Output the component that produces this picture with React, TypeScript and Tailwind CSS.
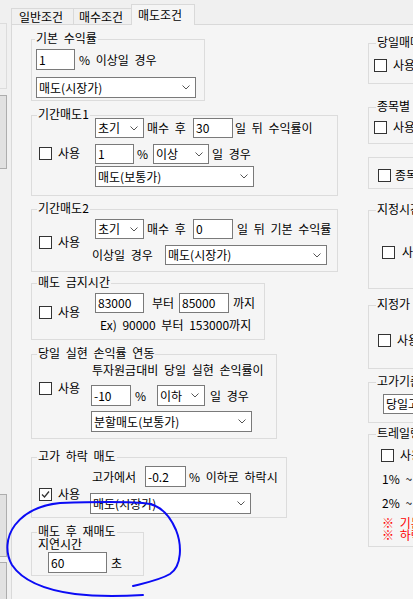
import type { ReactNode } from 'react';

// Windows-style "매도조건" tab page

function GroupBox({
    title,
    className,
    titleClassName = 'left-[5px]',
    children,
}: {
    title?: string;
    className: string;
    titleClassName?: string;
    children?: ReactNode;
}) {
    return (
        <div className={`relative shrink-0 border border-[#dcdcdc] ${className}`}>
            {title && (
                <span className={`absolute -top-[9px] whitespace-nowrap bg-[#f5f5f5] px-px leading-[14px] ${titleClassName}`}>
                    {title}
                </span>
            )}
            {children}
        </div>
    );
}

function CheckBox({ checked }: { checked?: boolean }) {
    return (
        <span className="flex h-[13px] w-[13px] shrink-0 items-center justify-center border border-[#333333] bg-white">
            {checked && (
                <svg width="9" height="9" viewBox="0 0 9 9">
                    <path d="M1 4.5 L3.5 7 L8 1.5" fill="none" stroke="#333333" strokeWidth="1.3" />
                </svg>
            )}
        </span>
    );
}

function UseCheck({
    checked,
    label = '사용',
    className = '',
    labelClassName = 'ml-[6px]',
}: {
    checked?: boolean;
    label?: string;
    className?: string;
    labelClassName?: string;
}) {
    return (
        <div className={`flex h-[14px] shrink-0 items-center ${className}`}>
            <CheckBox checked={checked} />
            <span className={`whitespace-nowrap leading-[14px] ${labelClassName}`}>{label}</span>
        </div>
    );
}

function TextBox({ value, className }: { value: string; className: string }) {
    return (
        <div className={`flex shrink-0 items-center border border-[#7a7a7a] bg-white pl-[2px] leading-[14px] ${className}`}>
            {value}
        </div>
    );
}

function Combo({ value, className }: { value: string; className: string }) {
    return (
        <div className={`flex shrink-0 items-center justify-between border border-[#7a7a7a] bg-white pl-[2px] pr-[5px] ${className}`}>
            <span className="whitespace-nowrap leading-[14px]">{value}</span>
            <svg width="8" height="5" viewBox="0 0 8 5" className="shrink-0">
                <path d="M0.5 0.5 L4 4 L7.5 0.5" fill="none" stroke="#555555" strokeWidth="1" />
            </svg>
        </div>
    );
}

const App = () => {
    return (
        <div className="relative h-[599px] w-[413px] overflow-hidden bg-[#f0f0f0] font-['Noto_Sans_CJK_KR',sans-serif] text-[12px] text-black [word-spacing:3px]">
            <div className="flex h-full">
                {/* clipped panel on the left */}
                <div className="flex w-[11px] shrink-0 flex-col">
                    <div className="mt-[23px] h-[71px] w-[7px] border-y border-r border-[#dcdcdc]" />
                    <div className="mt-[6px] h-[79px] w-[7px] border-y border-r border-[#adadad] bg-[#e1e1e1]" />
                    <div className="mt-[325px] h-[67px] w-[7px] border-y border-r border-[#adadad] bg-[#e1e1e1]" />
                    <div className="mt-[5px] h-[40px] w-[7px] border-r border-t border-[#adadad] bg-[#e1e1e1]" />
                </div>

                {/* tab control */}
                <div className="flex w-[440px] shrink-0 flex-col">
                    <div className="flex h-[24px] shrink-0 items-end">
                        <div className="flex h-[16px] w-[62px] items-center border-l border-t border-[#d9d9d9] pl-[7px]">일반조건</div>
                        <div className="flex h-[16px] w-[58px] items-center border-l border-t border-[#d9d9d9] pl-[5px]">매수조건</div>
                        <div className="relative z-10 -mb-px flex h-[21px] w-[64px] items-center border-x border-t border-[#d9d9d9] bg-[#f5f5f5] pl-[6px]">
                            매도조건
                        </div>
                    </div>

                    <div className="flex flex-1 border-l border-t border-[#d9d9d9] bg-[#f5f5f5] pl-[19px] pt-[14px]">
                        {/* left column */}
                        <div className="flex w-[307px] shrink-0 flex-col">
                            <GroupBox title="기본 수익률" titleClassName="left-[3px]" className="h-[62px] w-[174px] pl-[4px] pt-[9px]">
                                <div className="flex items-center">
                                    <TextBox value="1" className="h-[21px] w-[39px]" />
                                    <span className="ml-[4px]">% 이상일 경우</span>
                                </div>
                                <Combo value="매도(시장가)" className="mt-[7px] h-[21px] w-[160px]" />
                            </GroupBox>

                            <GroupBox title="기간매도1" className="mt-[14px] flex h-[81px] w-[307px] items-start pl-[7px] pt-[2px]">
                                <UseCheck className="mt-[28px] w-[56px]" />
                                <div className="flex flex-col">
                                    <div className="flex h-[20px] items-center">
                                        <Combo value="초기" className="h-[20px] w-[49px]" />
                                        <span className="ml-[3px] w-[46px] whitespace-nowrap">매수 후</span>
                                        <TextBox value="30" className="h-[20px] w-[40px]" />
                                        <span className="ml-[2px] whitespace-nowrap">일 뒤 수익률이</span>
                                    </div>
                                    <div className="mt-[6px] flex h-[20px] items-center">
                                        <TextBox value="1" className="h-[20px] w-[39px]" />
                                        <span className="ml-[3px] w-[16px]">%</span>
                                        <Combo value="이상" className="h-[20px] w-[56px]" />
                                        <span className="ml-[3px] whitespace-nowrap">일 경우</span>
                                    </div>
                                    <Combo value="매도(보통가)" className="mt-[2px] h-[21px] w-[159px]" />
                                </div>
                            </GroupBox>

                            <GroupBox title="기간매도2" className="mt-[13px] flex h-[63px] w-[307px] items-start pl-[7px] pt-[9px]">
                                <UseCheck className="mt-[16px] w-[53px]" />
                                <div className="flex flex-col">
                                    <div className="ml-[3px] flex h-[20px] items-center">
                                        <Combo value="초기" className="h-[20px] w-[49px]" />
                                        <span className="ml-[3px] w-[46px] whitespace-nowrap">매수 후</span>
                                        <TextBox value="0" className="h-[20px] w-[40px]" />
                                        <span className="ml-[4px] whitespace-nowrap">일 뒤 기본 수익률</span>
                                    </div>
                                    <div className="mt-[6px] flex h-[20px] items-center">
                                        <span className="w-[73px] whitespace-nowrap">이상일 경우</span>
                                        <Combo value="매도(시장가)" className="h-[20px] w-[162px]" />
                                    </div>
                                </div>
                            </GroupBox>

                            <GroupBox title="매도 금지시간" className="mt-[11px] flex h-[57px] w-[234px] items-start pl-[7px] pt-[9px]">
                                <UseCheck className="mt-[12px] w-[56px]" />
                                <div className="flex flex-col">
                                    <div className="flex h-[20px] items-center">
                                        <TextBox value="83000" className="h-[20px] w-[49px]" />
                                        <span className="ml-[8px] w-[27px] whitespace-nowrap">부터</span>
                                        <TextBox value="85000" className="h-[20px] w-[50px]" />
                                        <span className="ml-[4px] whitespace-nowrap">까지</span>
                                    </div>
                                    <span className="ml-[5px] mt-[5px] whitespace-nowrap leading-[14px]">Ex) 90000 부터 153000까지</span>
                                </div>
                            </GroupBox>

                            <GroupBox title="당일 실현 손익률 연동" className="mt-[14px] flex h-[85px] w-[246px] items-start pl-[7px] pt-[8px]">
                                <UseCheck className="mt-[18px] w-[53px]" />
                                <div className="flex flex-col">
                                    <span className="whitespace-nowrap leading-[14px]">투자원금대비 당일 실현 손익률이</span>
                                    <div className="-ml-px mt-[8px] flex h-[21px] items-center">
                                        <TextBox value="-10" className="h-[21px] w-[40px]" />
                                        <span className="ml-[4px] w-[22px]">%</span>
                                        <Combo value="이하" className="h-[21px] w-[48px]" />
                                        <span className="ml-[5px] whitespace-nowrap">일 경우</span>
                                    </div>
                                    <Combo value="분할매도(보통가)" className="-ml-px mt-[5px] h-[21px] w-[161px]" />
                                </div>
                            </GroupBox>

                            <GroupBox title="고가 하락 매도" className="mt-[18px] flex h-[61px] w-[256px] items-start pl-[7px] pt-[8px]">
                                <UseCheck checked className="mt-[21px] w-[53px]" />
                                <div className="flex flex-col">
                                    <div className="flex h-[21px] items-center">
                                        <span className="w-[53px] whitespace-nowrap">고가에서</span>
                                        <TextBox value="-0.2" className="h-[21px] w-[41px]" />
                                        <span className="ml-[3px] whitespace-nowrap">% 이하로 하락시</span>
                                    </div>
                                    <Combo value="매도(시장가)" className="-ml-[2px] mt-[6px] h-[21px] w-[161px]" />
                                </div>
                            </GroupBox>

                            <GroupBox title="매도 후 재매도" className="mt-[14px] h-[44px] w-[113px] pl-[6px] pt-[5px]">
                                <div className="leading-[12px]">지연시간</div>
                                <div className="ml-[10px] mt-[2px] flex items-center">
                                    <TextBox value="60" className="h-[21px] w-[59px]" />
                                    <span className="ml-[4px]">초</span>
                                </div>
                            </GroupBox>
                        </div>

                        {/* right column, cut off by the window */}
                        <div className="ml-[30px] flex w-[140px] shrink-0 flex-col">
                            <GroupBox title="당일매매 횟수" titleClassName="left-[7px]" className="mt-[4px] h-[41px] w-[140px] pl-[5px] pt-[14px]">
                                <UseCheck />
                            </GroupBox>
                            <GroupBox title="종목별 매도" titleClassName="left-[7px]" className="mt-[23px] h-[37px] w-[140px] pl-[5px] pt-[12px]">
                                <UseCheck />
                            </GroupBox>
                            <GroupBox className="mt-[13px] h-[32px] w-[140px] pl-[9px] pt-[10px]">
                                <UseCheck label="종목별 손절" labelClassName="ml-[4px]" />
                            </GroupBox>
                            <GroupBox title="지정시간 매도" titleClassName="left-[7px]" className="mt-[21px] h-[79px] w-[140px] pl-[13px] pt-[34px]">
                                <UseCheck labelClassName="ml-[7px]" />
                            </GroupBox>
                            <GroupBox title="지정가 매도" titleClassName="left-[7px]" className="mt-[16px] h-[64px] w-[140px] pl-[9px] pt-[27px]">
                                <UseCheck />
                            </GroupBox>
                            <GroupBox title="고가기준 하락" titleClassName="left-[7px]" className="mt-[13px] h-[41px] w-[140px] pl-[14px] pt-[11px]">
                                <Combo value="당일고가 대비" className="h-[20px] w-[110px]" />
                            </GroupBox>
                            <GroupBox title="트레일링 스탑" titleClassName="left-[7px]" className="mt-[11px] h-[113px] w-[140px] pl-[12px] pt-[13px]">
                                <UseCheck />
                                <div className="ml-px mt-[10px] flex h-[14px] items-center whitespace-nowrap">
                                    <span className="leading-[14px]">1% ~</span>
                                    <TextBox value="0.5" className="ml-[6px] h-[18px] w-[36px]" />
                                </div>
                                <div className="ml-px mt-[10px] flex h-[14px] items-center whitespace-nowrap">
                                    <span className="leading-[14px]">2% ~</span>
                                    <TextBox value="1" className="ml-[6px] h-[18px] w-[36px]" />
                                </div>
                                <div className="ml-px mt-[7px] whitespace-nowrap leading-[12px] text-[#ff0000]">
                                    <div>※ 기본 수익률 도달 후</div>
                                    <div>※ 하락폭 기준 매도</div>
                                </div>
                            </GroupBox>
                        </div>
                    </div>
                </div>
            </div>

            {/* hand-drawn blue circle around the last group */}
            <svg className="pointer-events-none absolute left-0 top-0" width="413" height="599" viewBox="0 0 413 599">
                <path
                    d="M133 586 C145 583 160 580 170 574 C182 566 182 545 176 530 C170 516 162 507 150 504 C130 501 90 502 60 503 C40 505 25 512 15 525 C6 537 5 553 12 565 C22 580 45 590 75 594 C100 597 125 596 143 595"
                    fill="none"
                    stroke="#0b0bf5"
                    strokeWidth="2"
                    strokeLinecap="round"
                />
            </svg>
        </div>
    );
};

export default App;
